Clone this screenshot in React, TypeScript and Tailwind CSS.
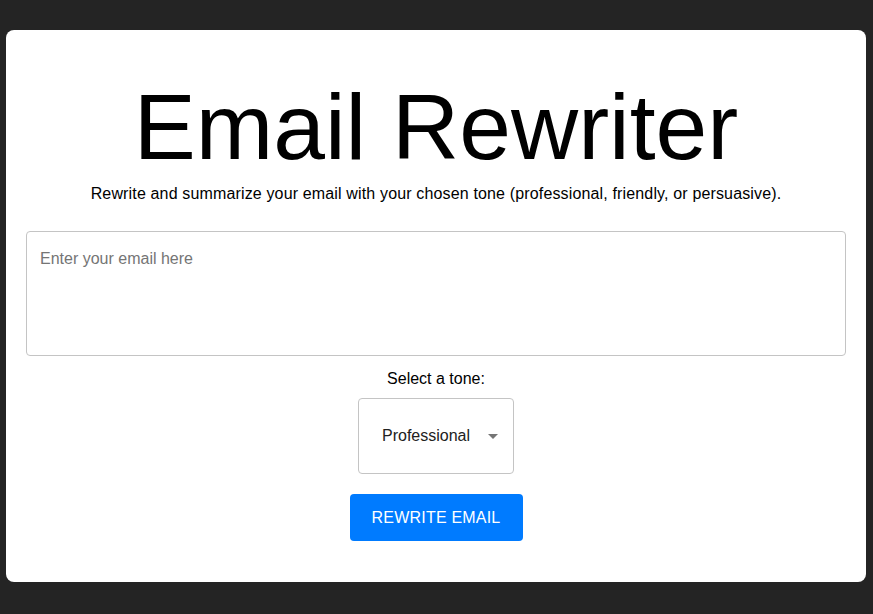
import React from "react";

export default function App() {
  return (
    <div className="min-h-[614px] w-full bg-[#242424] pt-[30px] pb-[32px] pl-[6px]" style={{ fontFamily: '"Liberation Sans", Arial, sans-serif' }}>
      <div className="w-[860px] rounded-[8px] bg-white px-[20px] pt-[51px] pb-[41px] flex flex-col items-center">
        <h1 className="text-[93px] leading-[1] text-black m-0">Email Rewriter</h1>
        <p className="mt-[8px] text-[16px] text-black tracking-[0.15px]">
          Rewrite and summarize your email with your chosen tone (professional, friendly, or persuasive).
        </p>
        <div className="mt-[25px] w-full h-[125px] rounded-[4px] border border-[#c4c4c4] px-[13px] pt-[15px]">
          <span className="text-[16px] text-[#757575]">Enter your email here</span>
        </div>
        <div className="mt-[11px] text-[16px] text-black">Select a tone:</div>
        <div className="mt-[7px] w-[156px] h-[76px] rounded-[4px] border border-[#c4c4c4] flex items-center pl-[23px] pr-[14px]">
          <span className="text-[16px] text-[#212121] flex-1">Professional</span>
          <svg width="10" height="5" viewBox="0 0 10 5" className="mr-[1px]">
            <path d="M0 0 L10 0 L5 5 Z" fill="#757575" />
          </svg>
        </div>
        <button className="mt-[20px] w-[173px] h-[47px] rounded-[4px] bg-[#007bff] text-white text-[16px] tracking-[0.2px] uppercase">
          Rewrite Email
        </button>
      </div>
    </div>
  );
}
